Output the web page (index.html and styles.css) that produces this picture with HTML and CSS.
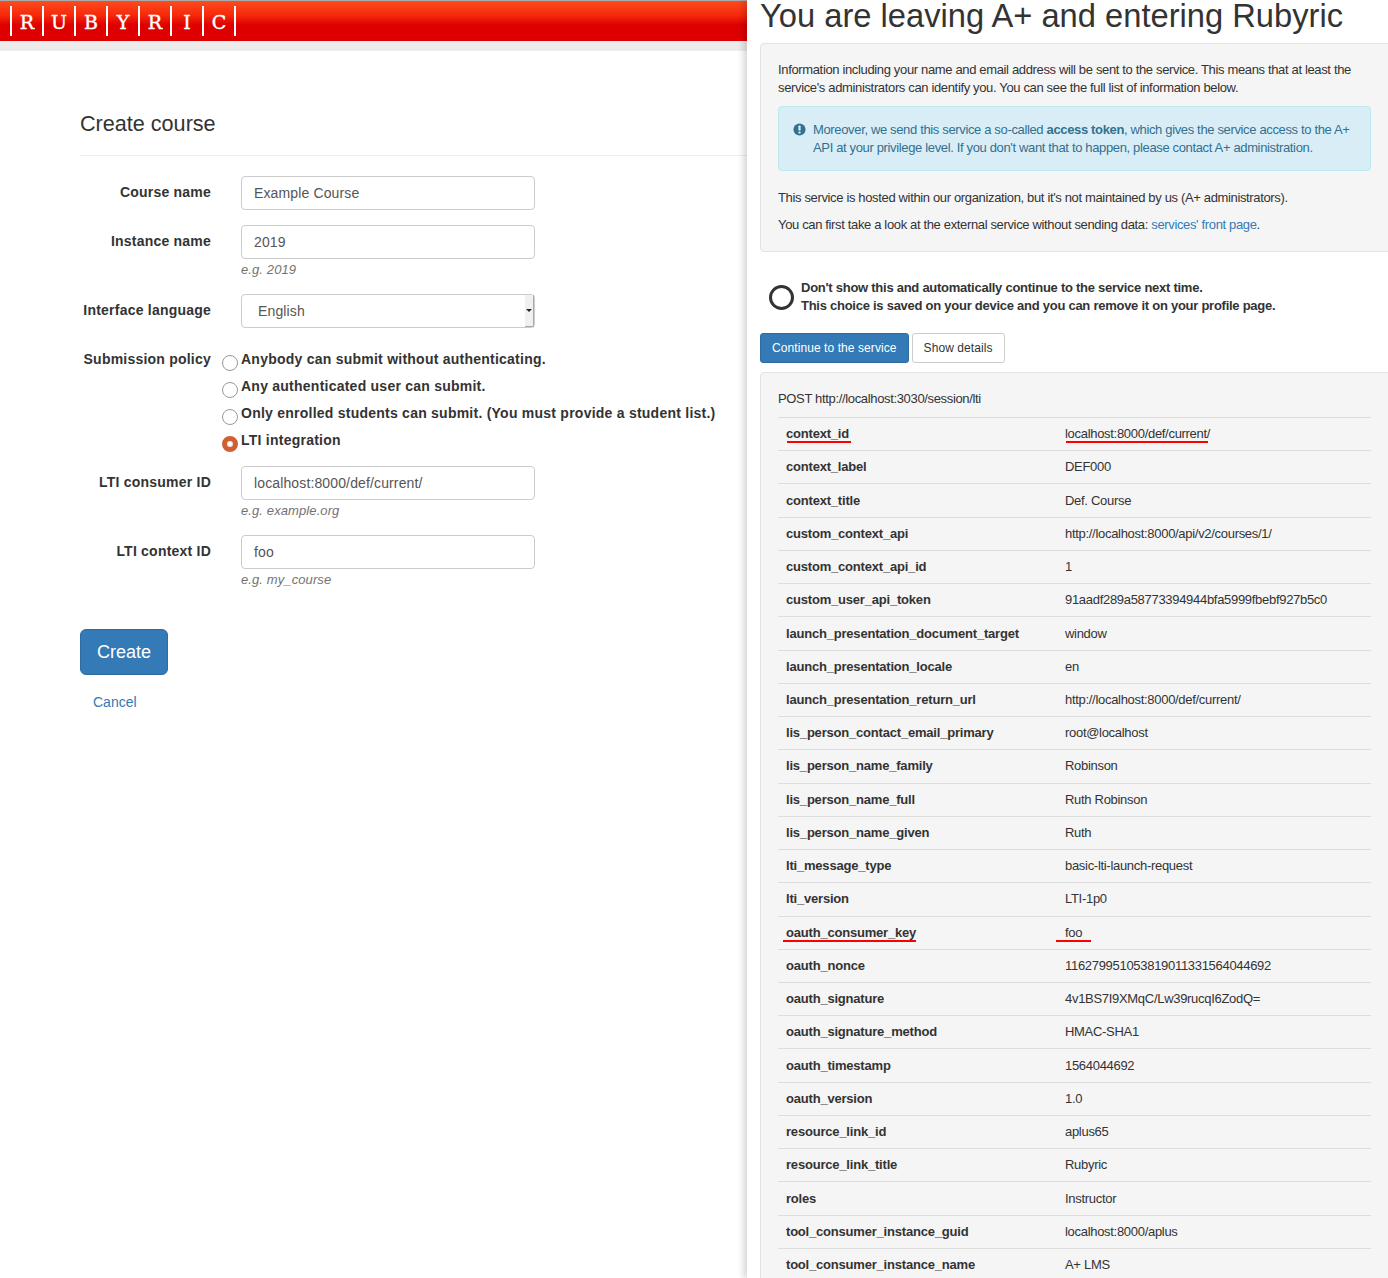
FILE: index.html
```html
<!DOCTYPE html>
<html lang="en">
<head>
    <meta charset="UTF-8">
    <meta name="viewport" content="width=device-width, initial-scale=1.0">
    <title>Create course</title>
    <link rel="stylesheet" href="styles.css">
</head>
<body>
    <div class="split">
        <!-- Rubyric side -->
        <div class="left">
            <div class="topbar">
                <div class="logo">
                    <span>R</span><span>U</span><span>B</span><span>Y</span><span>R</span><span>I</span><span>C</span>
                </div>
            </div>
            <div class="content">
                <h2>Create course</h2>
                <form>
                    <div class="form-row">
                        <label class="row-label">Course name</label>
                        <div class="field"><div class="input">Example Course</div></div>
                    </div>
                    <div class="form-row">
                        <label class="row-label">Instance name</label>
                        <div class="field">
                            <div class="input">2019</div>
                            <div class="help">e.g. 2019</div>
                        </div>
                    </div>
                    <div class="form-row">
                        <label class="row-label">Interface language</label>
                        <div class="field">
                            <div class="input select">English<span class="select-btn"></span></div>
                        </div>
                    </div>
                    <div class="form-row policy-row">
                        <label class="row-label">Submission policy</label>
                        <div class="radios">
                            <div class="radio-line"><span class="radio"></span>Anybody can submit without authenticating.</div>
                            <div class="radio-line"><span class="radio"></span>Any authenticated user can submit.</div>
                            <div class="radio-line"><span class="radio"></span>Only enrolled students can submit. (You must provide a student list.)</div>
                            <div class="radio-line"><span class="radio checked"></span>LTI integration</div>
                        </div>
                    </div>
                    <div class="form-row">
                        <label class="row-label">LTI consumer ID</label>
                        <div class="field">
                            <div class="input">localhost:8000/def/current/</div>
                            <div class="help">e.g. example.org</div>
                        </div>
                    </div>
                    <div class="form-row">
                        <label class="row-label">LTI context ID</label>
                        <div class="field">
                            <div class="input">foo</div>
                            <div class="help">e.g. my_course</div>
                        </div>
                    </div>
                    <button type="button" class="btn-create">Create</button>
                    <a class="cancel" href="#">Cancel</a>
                </form>
            </div>
        </div>

        <!-- A+ side -->
        <div class="right">
            <h1>You are leaving A+ and entering Rubyric</h1>
            <div class="well intro">
                <p>Information including your name and email address will be sent to the service. This means that at least the service's administrators can identify you. You can see the full list of information below.</p>
                <div class="notice">
                    <svg class="notice-icon" viewBox="0 0 14 14"><circle cx="7" cy="7" r="6.5" fill="#31708f"/><rect x="5.8" y="2.8" width="2.4" height="5.4" rx="0.6" fill="#d9edf7"/><rect x="5.8" y="9.2" width="2.4" height="2.2" rx="0.5" fill="#d9edf7"/></svg>
                    <div>Moreover, we send this service a so-called <b>access token</b>, which gives the service access to the A+ API at your privilege level. If you don't want that to happen, please contact A+ administration.</div>
                </div>
                <p>This service is hosted within our organization, but it's not maintained by us (A+ administrators).</p>
                <p class="last">You can first take a look at the external service without sending data: <a href="#">services' front page</a>.</p>
            </div>
            <div class="remember">
                <span class="big-radio"></span>
                <div>Don't show this and automatically continue to the service next time.<br>This choice is saved on your device and you can remove it on your profile page.</div>
            </div>
            <div class="actions">
                <button type="button" class="btn btn-primary">Continue to the service</button>
                <button type="button" class="btn">Show details</button>
            </div>
            <div class="well details">
                <div class="post-line">POST http://localhost:3030/session/lti</div>
                <table>
                    <tr><th><span class="mark mark-id">context_id</span></th><td><span class="mark mark-url">localhost:8000/def/current/</span></td></tr>
                    <tr><th>context_label</th><td>DEF000</td></tr>
                    <tr><th>context_title</th><td>Def. Course</td></tr>
                    <tr><th>custom_context_api</th><td>http://localhost:8000/api/v2/courses/1/</td></tr>
                    <tr><th>custom_context_api_id</th><td>1</td></tr>
                    <tr><th>custom_user_api_token</th><td>91aadf289a58773394944bfa5999fbebf927b5c0</td></tr>
                    <tr><th>launch_presentation_document_target</th><td>window</td></tr>
                    <tr><th>launch_presentation_locale</th><td>en</td></tr>
                    <tr><th>launch_presentation_return_url</th><td>http://localhost:8000/def/current/</td></tr>
                    <tr><th>lis_person_contact_email_primary</th><td>root@localhost</td></tr>
                    <tr><th>lis_person_name_family</th><td>Robinson</td></tr>
                    <tr><th>lis_person_name_full</th><td>Ruth Robinson</td></tr>
                    <tr><th>lis_person_name_given</th><td>Ruth</td></tr>
                    <tr><th>lti_message_type</th><td>basic-lti-launch-request</td></tr>
                    <tr><th>lti_version</th><td>LTI-1p0</td></tr>
                    <tr><th><span class="mark mark-key">oauth_consumer_key</span></th><td><span class="mark mark-foo">foo</span></td></tr>
                    <tr><th>oauth_nonce</th><td>116279951053819011331564044692</td></tr>
                    <tr><th>oauth_signature</th><td>4v1BS7I9XMqC/Lw39rucqI6ZodQ=</td></tr>
                    <tr><th>oauth_signature_method</th><td>HMAC-SHA1</td></tr>
                    <tr><th>oauth_timestamp</th><td>1564044692</td></tr>
                    <tr><th>oauth_version</th><td>1.0</td></tr>
                    <tr><th>resource_link_id</th><td>aplus65</td></tr>
                    <tr><th>resource_link_title</th><td>Rubyric</td></tr>
                    <tr><th>roles</th><td>Instructor</td></tr>
                    <tr><th>tool_consumer_instance_guid</th><td>localhost:8000/aplus</td></tr>
                    <tr><th>tool_consumer_instance_name</th><td>A+ LMS</td></tr>
                </table>
            </div>
        </div>
    </div>
</body>
</html>
```

FILE: styles.css
```css
/* General Styles */
html, body {
    margin: 0;
    height: 1278px;
    overflow: hidden;
}

body {
    font-family: "Liberation Sans", Arial, sans-serif;
    font-size: 14px;
    color: #333;
    background: #fff;
}

.split {
    display: flex;
    height: 1278px;
}

/* Left pane */
.left {
    width: 747px;
    flex: none;
}

.topbar {
    height: 40px;
    border-top: 1px solid #aaa;
    border-bottom: 10px solid #ececec;
    background: linear-gradient(to bottom, #ff4a1c 0%, #f52a0c 35%, #de0000 60%, #de0000 100%);
}

.logo {
    display: flex;
    padding: 5px 0 0 10px;
}

.logo span {
    width: 30px;
    height: 30px;
    border-left: 2px solid #fff;
    color: #fff;
    font-family: "DejaVu Serif", serif;
    font-size: 19px;
    line-height: 32px;
    text-align: center;
    -webkit-text-stroke: 0.4px #fff;
}

.logo span:last-child {
    border-right: 2px solid #fff;
}

.content {
    padding: 59px 0 0 80px;
}

h2 {
    margin: 0 0 20px;
    padding-bottom: 18px;
    border-bottom: 1px solid #eee;
    font-size: 21.6px;
    font-weight: 400;
    line-height: 27px;
}

.form-row {
    display: flex;
    margin-bottom: 15px;
}

.row-label {
    width: 131px;
    flex: none;
    padding-top: 6px;
    margin-right: 30px;
    font-size: 14px;
    font-weight: 700;
    line-height: 20px;
    text-align: right;
    letter-spacing: 0.22px;
}

.field {
    width: 294px;
}

.input {
    position: relative;
    height: 34px;
    box-sizing: border-box;
    padding: 6px 12px;
    border: 1px solid #ccc;
    border-radius: 4px;
    color: #555;
    line-height: 20px;
    letter-spacing: 0.13px;
}

.select {
    padding-left: 16px;
}

.select-btn {
    position: absolute;
    top: 0;
    right: 0;
    width: 9px;
    height: 32px;
    background: #f0f0f0;
    border-right: 1px solid #aaa;
    border-bottom: 1px solid #aaa;
    box-sizing: border-box;
}

.select-btn::after {
    content: "";
    position: absolute;
    top: 14px;
    left: 1px;
    border: 3px solid transparent;
    border-top: 3px solid #222;
}

.help {
    margin-top: 3px;
    height: 17px;
    color: #737373;
    font-size: 13px;
    font-style: italic;
    line-height: 15px;
    letter-spacing: 0.1px;
}

.policy-row {
    margin: 2px 0 12px;
}

.radios {
    margin: 3px 0 0 -19px;
}

.radio-line {
    display: flex;
    height: 27px;
    font-weight: 700;
    line-height: 27px;
    letter-spacing: 0.24px;
    white-space: nowrap;
}

.radio {
    flex: none;
    width: 16px;
    height: 16px;
    box-sizing: border-box;
    margin: 9px 3px 0 0;
    border: 1px solid #999;
    border-radius: 50%;
    background: #fff;
}

.radio.checked {
    border: 5px solid #cf5f34;
    box-shadow: inset 0 0 0 1px #f6e0d6;
}

.btn-create {
    display: block;
    width: 88px;
    height: 46px;
    margin-top: 40px;
    border: 1px solid #2e6da4;
    border-radius: 6px;
    background: #337ab7;
    color: #fff;
    font: 18px "Liberation Sans", Arial, sans-serif;
}

.cancel {
    display: inline-block;
    margin: 17px 0 0 13px;
    color: #337ab7;
    line-height: 20px;
    text-decoration: none;
}

/* Right pane */
.right {
    flex: 1;
    min-width: 0;
    padding-left: 13px;
    background: #fff;
    box-shadow: -4px 0 6px rgba(0, 0, 0, 0.15);
    position: relative;
}

h1 {
    margin: 0 0 12px;
    font-size: 32.7px;
    font-weight: 400;
    line-height: 31px;
    white-space: nowrap;
}

.well {
    box-sizing: border-box;
    margin-right: -2px;
    padding: 17px 18px 0 17px;
    border: 1px solid #e3e3e3;
    border-radius: 4px 0 0 4px;
    background: #f5f5f5;
    font-size: 13px;
    line-height: 18px;
    letter-spacing: -0.35px;
}

.intro {
    height: 209px;
}

.intro p {
    margin: 0 0 9px;
}

.notice {
    display: flex;
    height: 65px;
    box-sizing: border-box;
    margin: 9px 0 18px;
    padding: 14px 14px 0 14px;
    border: 1px solid #bce8f1;
    border-radius: 4px;
    background: #d9edf7;
    color: #31708f;
}

.notice-icon {
    flex: none;
    width: 13px;
    height: 13px;
    margin: 2px 7px 0 0;
}

a {
    color: #337ab7;
    text-decoration: none;
}

.remember {
    display: flex;
    align-items: center;
    height: 36px;
    margin: 27px 0 18px;
    padding-left: 9px;
    font-size: 13px;
    font-weight: 700;
    line-height: 18px;
    letter-spacing: -0.26px;
}

.big-radio {
    flex: none;
    width: 25px;
    height: 25px;
    box-sizing: border-box;
    margin-right: 7px;
    border: 3px solid #333;
    border-radius: 50%;
}

.actions {
    display: flex;
    gap: 3px;
    margin-bottom: 9px;
}

.btn {
    height: 30px;
    padding: 0 11px;
    border: 1px solid #ccc;
    border-radius: 3px;
    background: #fff;
    color: #333;
    font: 12px "Liberation Sans", Arial, sans-serif;
    letter-spacing: 0.08px;
}

.btn-primary {
    border-color: #2e6da4;
    background: #337ab7;
    color: #fff;
}

/* Details table */
.details {
    height: 910px;
}

.post-line {
    height: 27px;
    letter-spacing: -0.34px;
}

table {
    width: 593px;
    border-collapse: collapse;
    table-layout: fixed;
}

tr {
    height: 33.24px;
    border-top: 1px solid #ddd;
}

th, td {
    padding: 0 8px;
    font-size: 13px;
    text-align: left;
    white-space: nowrap;
    letter-spacing: -0.3px;
}

th {
    width: 263px;
    font-weight: 700;
    letter-spacing: -0.2px;
}

/* hand-drawn red underlines */
.mark {
    position: relative;
}

.mark::after {
    content: "";
    position: absolute;
    height: 2px;
    bottom: -2px;
    background: #f00;
}

.mark-id::after {
    left: 1px;
    right: -2px;
}

.mark-url::after {
    left: 1px;
    right: 2px;
}

.mark-key::after {
    left: -3px;
    right: 0;
}

.mark-foo::after {
    left: -9px;
    right: -9px;
}
```
